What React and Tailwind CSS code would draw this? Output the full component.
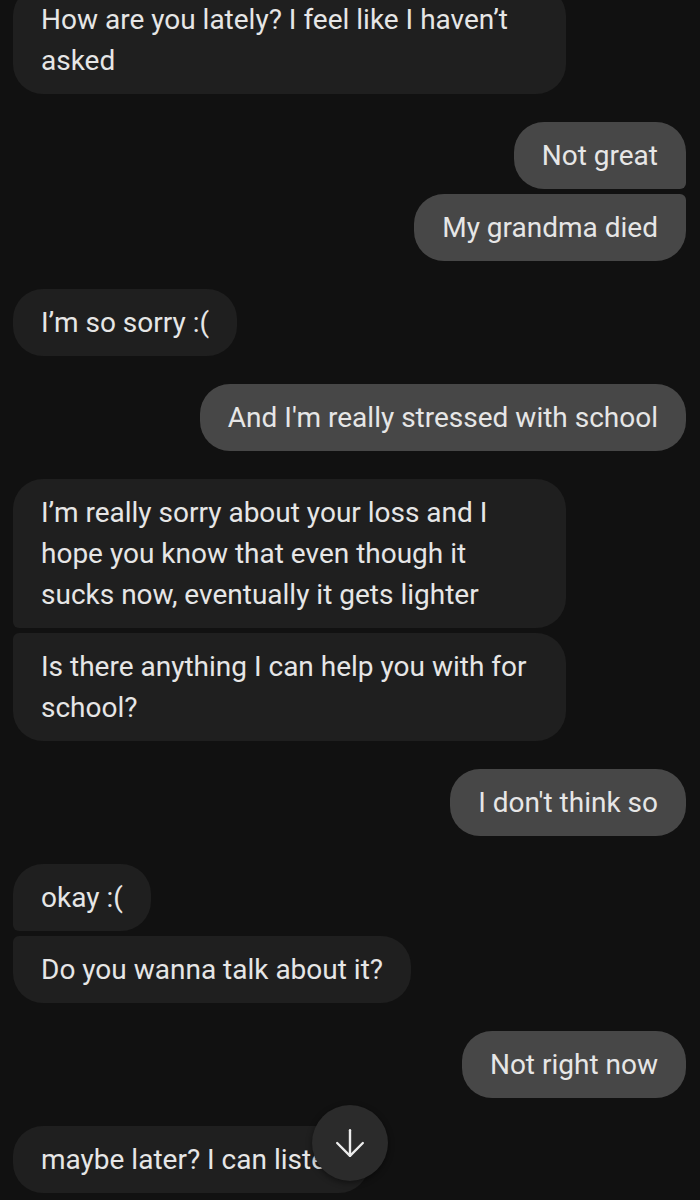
import { ArrowDown } from 'lucide-react';

// corner shapes for grouped bubbles
const shapes = {
    in: 'rounded-[30px]',
    inFirst: 'rounded-[30px] rounded-bl-[6px]',
    inLast: 'rounded-[30px] rounded-tl-[6px]',
    out: 'rounded-[30px]',
    outFirst: 'rounded-[30px] rounded-br-[6px]',
    outLast: 'rounded-[30px] rounded-tr-[6px]',
};

const messages = [
    { id: 1, from: 'in', shape: 'in', text: 'How are you lately? I feel like I haven\u2019t asked' },
    { id: 2, from: 'out', shape: 'outFirst', text: 'Not great' },
    { id: 3, from: 'out', shape: 'outLast', text: 'My grandma died', tight: true },
    { id: 4, from: 'in', shape: 'in', text: 'I\u2019m so sorry :(' },
    { id: 5, from: 'out', shape: 'out', text: "And I'm really stressed with school" },
    { id: 6, from: 'in', shape: 'inFirst', text: 'I\u2019m really sorry about your loss and I hope you know that even though it sucks now, eventually it gets lighter' },
    { id: 7, from: 'in', shape: 'inLast', text: 'Is there anything I can help you with for school?', tight: true },
    { id: 8, from: 'out', shape: 'out', text: "I don't think so" },
    { id: 9, from: 'in', shape: 'inFirst', text: 'okay :(' },
    { id: 10, from: 'in', shape: 'inLast', text: 'Do you wanna talk about it?', tight: true },
    { id: 11, from: 'out', shape: 'out', text: 'Not right now' },
    { id: 12, from: 'in', shape: 'in', text: 'maybe later? I can listen' },
];

const Bubble = ({ msg, first }) => {
    const isOut = msg.from === 'out';
    const spacing = first ? '-mt-[14px]' : msg.tight ? 'mt-[5px]' : 'mt-[28px]';

    return (
        <div className={`flex ${isOut ? 'justify-end' : 'justify-start'} ${spacing}`}>
            <div
                className={`max-w-[553px] px-[28px] py-[13px] text-[28px] leading-[41px] text-[#e6e6e6] ${shapes[msg.shape]} ${isOut ? 'bg-[#474747]' : 'bg-[#1f1f1f]'}`}
            >
                {msg.text}
            </div>
        </div>
    );
};

export default function App() {
    return (
        <div className="relative h-[1200px] w-[700px] overflow-hidden bg-[#111111] font-['Roboto','Liberation_Sans',sans-serif]">
            <div className="flex flex-col pl-[13px] pr-[14px]">
                {messages.map((m, i) => (
                    <Bubble key={m.id} msg={m} first={i === 0} />
                ))}
            </div>

            {/* scroll to bottom button */}
            <button className="absolute left-[312px] top-[1105px] flex h-[76px] w-[76px] items-center justify-center rounded-full bg-[#2b2b2b] shadow-[0_2px_6px_rgba(0,0,0,0.45)]">
                <ArrowDown className="text-[#ececec]" size={44} strokeWidth={1.3} />
            </button>
        </div>
    );
}
